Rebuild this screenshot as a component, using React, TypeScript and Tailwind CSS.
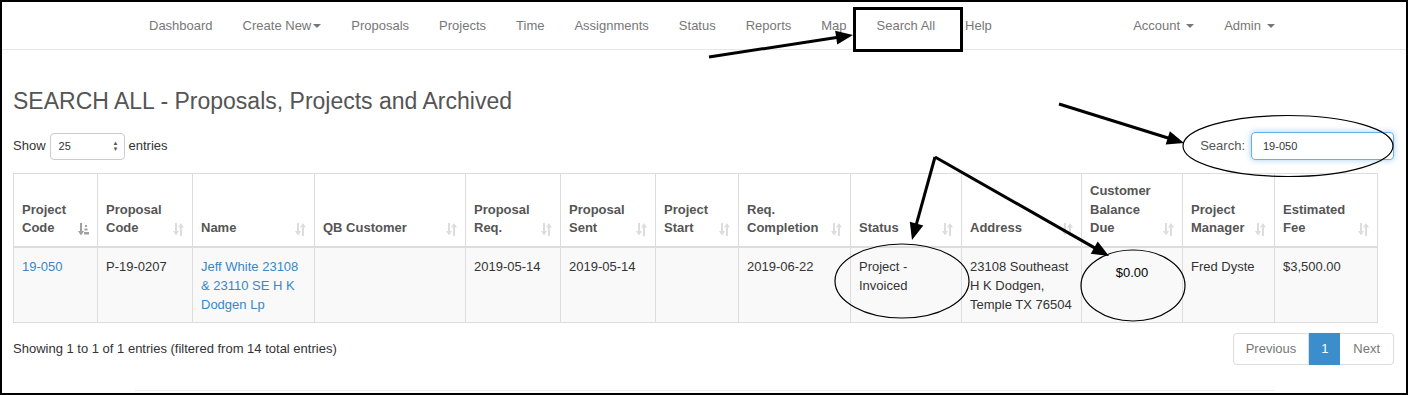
import React from 'react'

const font = { fontFamily: '"Liberation Sans", Arial, Helvetica, sans-serif' }

const navLeft = ['Dashboard', 'Create New', 'Proposals', 'Projects', 'Time', 'Assignments', 'Status', 'Reports', 'Map', 'Search All', 'Help']

const cols = [
  { w: 'w-[84px]', h: ['Project', 'Code'], sorted: true },
  { w: 'w-[95px]', h: ['Proposal', 'Code'] },
  { w: 'w-[122px]', h: ['Name'] },
  { w: 'w-[151px]', h: ['QB Customer'] },
  { w: 'w-[95px]', h: ['Proposal', 'Req.'] },
  { w: 'w-[95px]', h: ['Proposal', 'Sent'] },
  { w: 'w-[83px]', h: ['Project', 'Start'] },
  { w: 'w-[112px]', h: ['Req.', 'Completion'] },
  { w: 'w-[111px]', h: ['Status'] },
  { w: 'w-[120px]', h: ['Address'] },
  { w: 'w-[101px]', h: ['Customer', 'Balance', 'Due'] },
  { w: 'w-[92px]', h: ['Project', 'Manager'] },
  { w: 'w-[103px]', h: ['Estimated', 'Fee'] },
]

function Caret() {
  return <span className="inline-block w-0 h-0 align-middle border-x-[4px] border-x-transparent border-t-[4px] border-t-[#777]" />
}

function SortBoth() {
  return (
    <svg width="11" height="13" viewBox="0 0 11 13" fill="#dddddd">
      <rect x="2" y="0" width="2" height="9" />
      <polygon points="0,8 6,8 3,12.5" />
      <rect x="7" y="3.5" width="2" height="9.5" />
      <polygon points="5,4.5 11,4.5 8,0" />
    </svg>
  )
}

function SortAsc() {
  return (
    <svg width="11" height="13" viewBox="0 0 11 13" fill="#a0a0a0">
      <rect x="2" y="0" width="2" height="9" />
      <polygon points="0,8 6,8 3,12.5" />
      <rect x="7" y="2" width="2" height="2" />
      <rect x="6.5" y="5.5" width="3" height="2" />
      <rect x="6" y="9" width="5" height="2.5" />
    </svg>
  )
}

function Arrow({ x1, y1, x2, y2 }: { x1: number; y1: number; x2: number; y2: number }) {
  const a = Math.atan2(y2 - y1, x2 - x1)
  const len = 17
  const half = 7
  const bx = x2 - len * Math.cos(a)
  const by = y2 - len * Math.sin(a)
  const px = -Math.sin(a) * half
  const py = Math.cos(a) * half
  return (
    <g>
      <line x1={x1} y1={y1} x2={bx + Math.cos(a) * 2} y2={by + Math.sin(a) * 2} stroke="black" strokeWidth={3} />
      <polygon points={`${x2},${y2} ${bx + px},${by + py} ${bx - px},${by - py}`} fill="black" />
    </g>
  )
}

function Annotations() {
  return (
    <svg className="absolute inset-0 pointer-events-none" width="1408" height="395" viewBox="0 0 1408 395">
      <rect x="854.5" y="8.5" width="107" height="42" fill="none" stroke="black" strokeWidth="3" />
      <Arrow x1={709} y1={57} x2={853} y2={35} />
      <Arrow x1={1059} y1={104} x2={1184} y2={143} />
      <Arrow x1={935} y1={157} x2={912} y2={240} />
      <Arrow x1={935} y1={157} x2={1109} y2={256} />
      <ellipse cx="1288" cy="146" rx="105" ry="30.5" fill="none" stroke="black" strokeWidth="1.2" />
      <ellipse cx="902" cy="281" rx="67" ry="37" fill="none" stroke="black" strokeWidth="1.2" />
      <ellipse cx="1133" cy="285.5" rx="52" ry="35.5" fill="none" stroke="black" strokeWidth="1.2" />
    </svg>
  )
}

export default function App() {
  const link = 'text-[#3a87c8]'
  const td = 'p-[8px] pt-[9px] border border-[#ddd]'
  return (
    <div className="relative w-[1408px] h-[395px] overflow-hidden bg-white text-[13px] text-[#333]" style={font}>
      {/* navbar */}
      <div className="mt-[2px] h-[48px] border-b border-[#e7e7e7] flex items-center text-[13px] text-[#777]">
        <div className="flex items-center ml-[134px]">
          {navLeft.map((n) => (
            <span key={n} className="px-[15px] flex items-center gap-[2px]">
              {n}
              {n === 'Create New' && <Caret />}
            </span>
          ))}
        </div>
        <div className="ml-auto mr-[133px] flex items-center">
          <span className="px-[15px] flex items-center gap-[6px]">Account <Caret /></span>
          <span className="pl-[15px] flex items-center gap-[6px]">Admin <Caret /></span>
        </div>
      </div>

      <div className="pl-[13px] pr-[14px]">
        <h3 className="mt-[38px] text-[23px] leading-[26px] text-[#555]">SEARCH ALL - Proposals, Projects and Archived</h3>

        <div className="mt-[18px] flex items-center justify-between">
          <div className="flex items-center gap-[4px]">
            <span>Show</span>
            <div className="w-[75px] h-[27px] border border-[#ccc] rounded-[4px] flex items-center justify-between pl-[8px] pr-[5px] text-[11px] text-[#333]">
              <span>25</span>
              <span className="flex flex-col text-[6px] leading-[6px] text-[#555]">
                <span>▲</span>
                <span>▼</span>
              </span>
            </div>
            <span>entries</span>
          </div>
          <div className="flex items-center gap-[6px]">
            <span className="text-[#555]">Search:</span>
            <input
              readOnly
              value="19-050"
              className="w-[143px] h-[28px] border border-[#66afe9] rounded-[4px] px-[11px] text-[11px] text-[#333] outline-none shadow-[0_0_6px_rgba(102,175,233,0.6)]"
              style={font}
            />
          </div>
        </div>

        <table className="mt-[13px] w-[1364px] table-fixed border-collapse border border-[#ddd] leading-[18.5px]">
          <colgroup>
            {cols.map((c, i) => (
              <col key={i} className={c.w} />
            ))}
          </colgroup>
          <thead>
            <tr>
              {cols.map((c, i) => (
                <th
                  key={i}
                  className="relative align-bottom text-left font-bold text-[#555] p-[8px] pr-[24px] border border-[#ddd] border-b-2 whitespace-nowrap"
                >
                  {c.h.map((l, j) => (
                    <div key={j}>{l}</div>
                  ))}
                  <span className="absolute right-[8px] bottom-[10px] flex">{c.sorted ? <SortAsc /> : <SortBoth />}</span>
                </th>
              ))}
            </tr>
          </thead>
          <tbody className="leading-[19px]">
            <tr className="bg-[#f9f9f9] align-top">
              <td className={td}><span className={link}>19-050</span></td>
              <td className={td}>P-19-0207</td>
              <td className={td}>
                <span className={link}>Jeff White 23108<br />&amp; 23110 SE H K<br />Dodgen Lp</span>
              </td>
              <td className={td}></td>
              <td className={td}>2019-05-14</td>
              <td className={td}>2019-05-14</td>
              <td className={td}></td>
              <td className={td}>2019-06-22</td>
              <td className={td}>Project -<br />Invoiced</td>
              <td className={td}>23108 Southeast<br />H K Dodgen,<br />Temple TX 76504</td>
              <td className="p-[8px] pt-[15px] border border-[#ddd] text-center text-black">$0.00</td>
              <td className={td}>Fred Dyste</td>
              <td className={td}>$3,500.00</td>
            </tr>
          </tbody>
        </table>

        <div className="mt-[10px] flex items-center justify-between">
          <span>Showing 1 to 1 of 1 entries (filtered from 14 total entries)</span>
          <div className="flex h-[32px] text-[13px]">
            <span className="px-[12px] flex items-center border border-[#ddd] rounded-l-[4px] text-[#777]">Previous</span>
            <span className="w-[31px] flex items-center justify-center border border-[#3c8dcb] bg-[#3c8dcb] text-white">1</span>
            <span className="px-[13px] flex items-center border border-[#ddd] border-l-0 rounded-r-[4px] text-[#777]">Next</span>
          </div>
        </div>

        <div className="mt-[25px] ml-[122px] w-[1139px] h-px bg-[#eee]" />
      </div>

      <div className="absolute inset-0 border-2 border-black pointer-events-none" />
      <Annotations />
    </div>
  )
}
